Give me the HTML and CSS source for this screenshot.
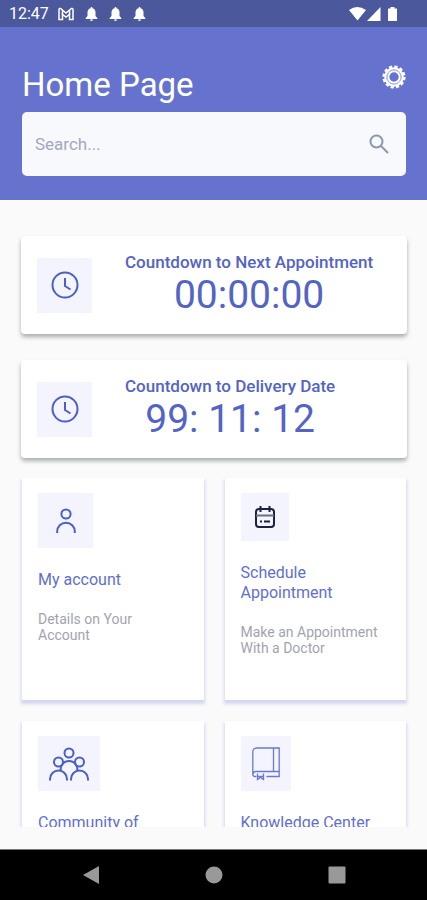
FILE: index.html
```html
<!DOCTYPE html>
<html lang="en">
<head>
<meta charset="utf-8">
<meta name="viewport" content="width=device-width, initial-scale=1">
<title>Home Page</title>
<link rel="stylesheet" href="styles.css">
</head>
<body>
<div class="screen">
  <div class="status">
    <span class="status-time">12:47</span>
    <div class="status-notes">
      <svg width="16" height="14" viewBox="0 0 16 14" fill="none" stroke="#fff"><path d="M1 12.500V2.500Q1 1 2.500 1.500L8 6L13.500 1.500Q15 1 15 2.500V12.500H11.500V7.500L8 10L4.500 7.500V12.500Z" stroke-width="1.500"/><path d="M4.500 3V8M11.500 3V8" stroke-width="1.500"/></svg>
      <svg width="13" height="14" viewBox="0 0 13 14" fill="#fff"><path d="M6.500 0Q7.500 0 7.500 1.300Q10.500 2.200 10.500 5.500V9L12.300 11V12H.7V11L2.500 9V5.500Q2.500 2.200 5.500 1.300Q5.500 0 6.500 0ZM5 12.500H8Q7.800 14 6.500 14Q5.200 14 5 12.500Z"/></svg>
      <svg width="13" height="14" viewBox="0 0 13 14" fill="#fff"><path d="M6.500 0Q7.500 0 7.500 1.300Q10.500 2.200 10.500 5.500V9L12.300 11V12H.7V11L2.500 9V5.500Q2.500 2.200 5.500 1.300Q5.500 0 6.500 0ZM5 12.500H8Q7.800 14 6.500 14Q5.200 14 5 12.500Z"/></svg>
      <svg width="13" height="14" viewBox="0 0 13 14" fill="#fff"><path d="M6.500 0Q7.500 0 7.500 1.300Q10.500 2.200 10.500 5.500V9L12.300 11V12H.7V11L2.500 9V5.500Q2.500 2.200 5.500 1.300Q5.500 0 6.500 0ZM5 12.500H8Q7.800 14 6.500 14Q5.200 14 5 12.500Z"/></svg>
    </div>
    <svg width="50" height="16" viewBox="0 0 50 16" fill="#fff"><path d="M0 4Q8 -2 17 4L8.500 14.500ZM18 15L31.500 1V15ZM39 2.500H41.500V1H45.500V2.500H48V15H39Z"/></svg>
  </div>

  <header class="header">
    <div class="title-row">
      <h1>Home Page</h1>
      <button class="icon-button" type="button" aria-label="Settings">
        <svg width="24" height="24" viewBox="0 0 24 24" fill="none" stroke="#fff"><circle cx="12" cy="12" r="10.400" stroke-width="2.400" stroke-dasharray="3.300 2.150"/><circle cx="12" cy="12" r="8.700" stroke-width="2.200"/><circle cx="12" cy="12" r="5.700" stroke-width="2"/><circle cx="12" cy="12" r="7.200" stroke="#c3c8ee" stroke-width="1"/></svg>
      </button>
    </div>
    <form class="search">
      <input type="search" aria-label="Search" placeholder="Search...">
      <button class="icon-button" type="submit" aria-label="Submit search">
        <svg width="20" height="20" viewBox="0 0 20 20" fill="none" stroke="#8f96b3" stroke-width="2"><circle cx="7.500" cy="7.500" r="6"/><path d="M12 12L19 19"/></svg>
      </button>
    </form>
  </header>

  <main class="content">
    <section class="countdown">
      <div class="icon-box">
        <svg width="28" height="28" viewBox="0 0 28 28" fill="none" stroke="#4c5fc4" stroke-width="2"><circle cx="14" cy="14" r="12.500"/><path d="M14 7V15L19.500 18.500"/></svg>
      </div>
      <div class="countdown-text">
        <h2>Countdown to Next Appointment</h2>
        <p class="timer">00:00:00</p>
      </div>
    </section>
    <section class="countdown">
      <div class="icon-box">
        <svg width="28" height="28" viewBox="0 0 28 28" fill="none" stroke="#4c5fc4" stroke-width="2"><circle cx="14" cy="14" r="12.500"/><path d="M14 7V15L19.500 18.500"/></svg>
      </div>
      <div class="countdown-text">
        <h2>Countdown to Delivery Date</h2>
        <p class="timer">99: 11: 12</p>
      </div>
    </section>

    <div class="tiles">
      <a class="tile" href="#account">
        <span class="icon-box">
          <svg width="20" height="26" viewBox="0 0 20 26" fill="none" stroke="#4c5fc4" stroke-width="2"><circle cx="10" cy="6" r="4.600"/><path d="M1.200 25V23.500A8.800 8.800 0 0 1 18.800 23.500V25"/></svg>
        </span>
        <span class="tile-title">My account</span>
        <span class="tile-note">Details on Your Account</span>
      </a>
      <a class="tile" href="#schedule">
        <span class="icon-box small">
          <svg width="20" height="22" viewBox="0 0 20 22" fill="none" stroke="#1c2140" stroke-width="2"><rect x="1" y="3" width="18" height="18" rx="3"/><path d="M5.500 0V6M14.500 0V6M5 15.500H7M9 15.500H15"/><path d="M1 9.500H19" stroke="#6a6e83"/></svg>
        </span>
        <span class="tile-title">Schedule Appointment</span>
        <span class="tile-note">Make an Appointment With a Doctor</span>
      </a>
      <a class="tile" href="#community">
        <span class="icon-box wide">
          <svg width="40" height="34" viewBox="0 0 40 34" fill="none" stroke="#4c5fc4" stroke-width="2"><circle cx="20" cy="6" r="4.500"/><circle cx="9.500" cy="15" r="4.500"/><circle cx="30.500" cy="15" r="4.500"/><path d="M1 33.500V32A8.500 8.500 0 0 1 18 32V33.500M22 33.500V32A8.500 8.500 0 0 1 39 32V33.500M11.800 23.500A8.300 8.300 0 1 1 28.200 23.500"/></svg>
        </span>
        <span class="tile-title">Community of</span>
      </a>
      <a class="tile" href="#knowledge">
        <span class="icon-box medium">
          <svg width="28" height="34" viewBox="0 0 28 34" fill="none" stroke="#6a78ce" stroke-width="1.300"><path d="M4.500 29.500H3Q.8 29.500 .8 27V5Q.8 1 5 1H27.200V29.500H14.500M.8 27Q1.500 24.500 4 24.500H27M21.500 1V24.500"/><path d="M5.500 26.500V32.500L8.500 30.500L11.500 32.500V26.500M5.500 29.500H11.500"/></svg>
        </span>
        <span class="tile-title">Knowledge Center</span>
      </a>
    </div>
  </main>

  <nav class="system-nav" aria-label="System">
    <button class="icon-button" type="button" aria-label="Back"><svg width="18" height="20" viewBox="0 0 18 20" fill="#999"><path d="M17 1V19L1 10Z"/></svg></button>
    <button class="icon-button" type="button" aria-label="Home"><svg width="18" height="18" viewBox="0 0 18 18" fill="#999"><circle cx="9" cy="9" r="8.500"/></svg></button>
    <button class="icon-button" type="button" aria-label="Recent apps"><svg width="18" height="18" viewBox="0 0 18 18" fill="#999"><rect x=".5" y=".5" width="17" height="17" rx="1"/></svg></button>
  </nav>
</div>
</body>
</html>
```
FILE: styles.css
```css
* { box-sizing: border-box; }

body {
  margin: 0;
  font-family: Roboto, "Liberation Sans", sans-serif;
  background: #fafafa;
}

h1, h2, p { margin: 0; font-weight: 400; }

svg { display: block; flex: none; }

.screen {
  display: flex;
  flex-direction: column;
  height: 100vh;
}

.status {
  display: flex;
  align-items: center;
  flex: none;
  height: 27px;
  padding: 0 28px 0 9px;
  background: #4b589b;
  color: #fff;
}

.status-time { font-size: 16px; }

.status-notes {
  display: flex;
  gap: 11px;
  flex: 1;
  margin-left: 9px;
}

.header {
  flex: none;
  padding: 36px 21px 24px 22px;
  background: #6673ce;
  color: #fff;
}

.title-row {
  display: flex;
  justify-content: space-between;
  align-items: flex-start;
  height: 49px;
}

h1 {
  margin-top: 2px;
  font-size: 33px;
  line-height: 40px;
}

.icon-button {
  display: flex;
  align-items: center;
  justify-content: center;
  padding: 0;
  border: 0;
  background: none;
}

.title-row .icon-button { margin-top: 2px; }

.search {
  display: flex;
  align-items: center;
  height: 64px;
  padding: 0 17px 0 13px;
  border-radius: 5px;
  background: #f7f9fd;
}

.search input {
  flex: 1;
  min-width: 0;
  padding: 0;
  border: 0;
  outline: 0;
  background: none;
  color: #555d80;
  font: 17px/24px Roboto, "Liberation Sans", sans-serif;
}

.search input::placeholder { color: #a3a8bb; opacity: 1; }

.content {
  flex: 1;
  min-height: 0;
  margin-bottom: 22px;
  padding: 36px 20px 0 21px;
  overflow: hidden;
}

.countdown {
  display: flex;
  align-items: center;
  gap: 33px;
  height: 98px;
  margin-bottom: 26px;
  padding: 0 16px;
  border-radius: 4px;
  background: #fff;
  box-shadow: 0 3px 4px #a9adb1;
}

.countdown + .countdown { margin-bottom: 20px; }

.countdown-text { text-align: center; color: #5364c5; }

h2 { font-size: 17px; line-height: 20px; font-weight: 500; }

.timer { font-size: 39px; line-height: 46px; }

.icon-box {
  display: flex;
  align-items: center;
  justify-content: center;
  flex: none;
  width: 55px;
  height: 55px;
  background: #f3f4fd;
}

.icon-box.small { width: 48px; height: 48px; }
.icon-box.medium { width: 50px; }
.icon-box.wide { width: 62px; }

.tiles {
  display: grid;
  grid-template-columns: 1fr 1fr;
  gap: 21px;
  padding: 0 1px;
}

.tile {
  display: flex;
  flex-direction: column;
  height: 222px;
  padding: 15px 22px 15px 16px;
  background: #fff;
  box-shadow: 0 3px 3px 1px #d4d5f0;
  color: #5f6fd0;
  text-decoration: none;
}

.tile-title {
  margin-top: 22px;
  font-size: 16px;
  line-height: 20px;
}

.tile-note {
  margin-top: 21px;
  color: #a1a4b0;
  font-size: 14px;
  line-height: 16px;
}

.system-nav {
  display: flex;
  align-items: center;
  justify-content: center;
  gap: 105px;
  flex: none;
  height: 51px;
  border-top: 1px solid #777;
  background: #000;
}
```
